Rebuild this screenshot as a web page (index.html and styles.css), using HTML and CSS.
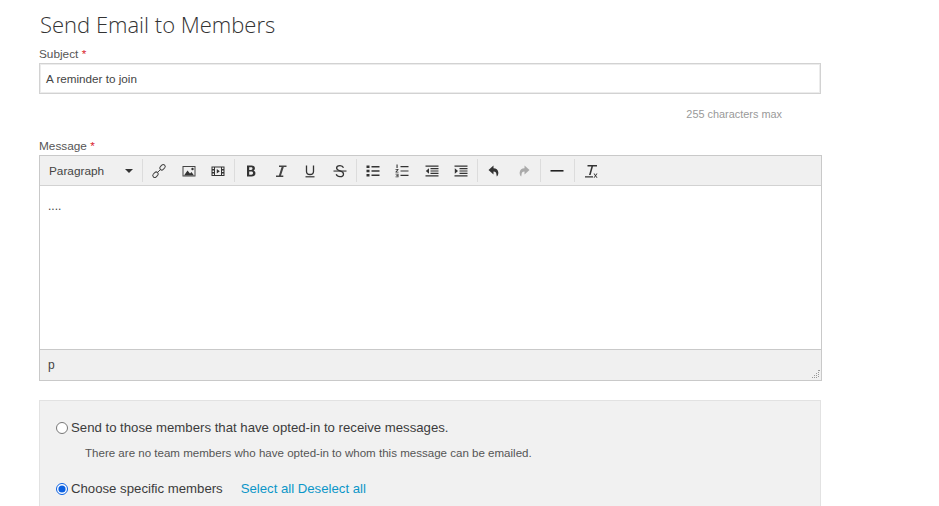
FILE: index.html
```html
<!DOCTYPE html>
<html lang="en">
<head>
<meta charset="utf-8">
<title>Send Email to Members</title>
<link rel="stylesheet" href="styles.css">
</head>
<body>
<main class="page">
  <h1 class="title">Send Email to Members</h1>
  <label class="label">Subject <span class="req">*</span></label>
  <div class="input">A reminder to join</div>
  <div class="hint">255 characters max</div>
  <label class="label label-msg">Message <span class="req">*</span></label>
  <div class="editor">
    <div class="toolbar">
      <div class="select"><span>Paragraph</span><i class="caret"></i></div>
      <div class="group">
        <svg class="ic" viewBox="0 0 16 16"><g fill="none" stroke="#444" stroke-width="1"><rect x="8.500" y="2.300" width="6" height="4" rx="2" transform="rotate(-45 11.500 4.300)"/><rect x="1.500" y="9.700" width="6" height="4" rx="2" transform="rotate(-45 4.500 11.700)"/><path d="M6.300 9.700l3.400-3.400"/></g></svg>
        <svg class="ic" viewBox="0 0 16 16"><path fill="#444" fill-rule="evenodd" d="M1.500 3h13v10.500h-13zM2.500 4v8.500h11V4z"/><path fill="#333" d="M3 12.500l3.500-5 2.500 3 1.500-1.500 2.500 3.500z"/><circle cx="11.500" cy="6" r="1.200" fill="#333"/></svg>
        <svg class="ic" viewBox="0 0 16 16"><path fill="#333" fill-rule="evenodd" d="M1.500 3.500h13v9.500h-13zM2.500 4.500V6H4V4.500zM12 4.500V6h1.500V4.500zM2.500 7.500V9H4V7.500zM12 7.500V9h1.500V7.500zM2.500 10.500V12H4v-1.500zM12 10.500V12h1.500v-1.500zM5 4.500v7.500h6V4.500zM6.800 6l3 2.200-3 2.300z"/></svg>
      </div>
      <div class="group">
        <svg class="ic" viewBox="0 0 16 16"><path fill="#333" fill-rule="evenodd" d="M4 2.500h4.500c2.200 0 3.400 1 3.400 2.800 0 1.100-.5 1.900-1.400 2.300 1.200.4 1.900 1.300 1.900 2.600 0 2.200-1.500 3.300-3.900 3.300H4zM6.200 4.300v2.600h1.900c.9 0 1.400-.5 1.400-1.300s-.5-1.300-1.400-1.300zM6.200 8.600v3.100h2.200c1.100 0 1.600-.6 1.600-1.600s-.6-1.500-1.600-1.500z"/></svg>
        <svg class="ic" viewBox="0 0 16 16"><path fill="#444" d="M6 2.500h7.500v1.400h-2.700L8 12.600h2.300V14H3v-1.400h2.900L8.600 3.900H6z"/></svg>
        <svg class="ic" viewBox="0 0 16 16"><path fill="none" stroke="#333" stroke-width="1.300" d="M4.500 2.500v6c0 2 1.300 3 3.500 3s3.500-1 3.500-3v-6"/><path fill="#333" d="M3.500 13.200h9v1.200h-9z"/></svg>
        <svg class="ic" viewBox="0 0 16 16"><path fill="none" stroke="#333" stroke-width="1.300" d="M11.500 4.800C11 3.400 9.800 2.700 8 2.700c-2.100 0-3.400 1-3.400 2.400 0 3.400 6.900 2.200 6.900 5.800 0 1.600-1.500 2.700-3.500 2.700-1.900 0-3.200-.8-3.800-2.300"/><path fill="#333" d="M1.500 7.500h13v1.100h-13z"/></svg>
      </div>
      <div class="group">
        <svg class="ic" viewBox="0 0 16 16"><path fill="#333" d="M1.500 2.500h3v2.600h-3zM1.500 6.700h3v2.600h-3zM1.500 10.900h3v2.600h-3zM6.500 3h8v1.400h-8zM6.500 7.300h8v1.400h-8zM6.500 11.500h8v1.400h-8z"/></svg>
        <svg class="ic" viewBox="0 0 16 16"><path fill="#333" d="M6.500 3h8v1.200h-8zM6.500 7.400h8v1.200h-8zM6.500 11.800h8v1.200h-8zM2.500 1.500h1.100v3.500H2.500zM1.500 6h3v.8L2.700 8.700h1.800v.8h-3v-.8l1.800-1.900H1.500zM1.500 10.700h3v3.500h-3v-.8h2.200v-.6H2.300v-.7h1.400v-.6H1.500z"/></svg>
        <svg class="ic" viewBox="0 0 16 16"><path fill="#333" d="M1.500 2.500h13v1.300h-13zM6.500 5h8v1.200h-8zM6.500 7.400h8v1.200h-8zM6.500 9.800h8v1.200h-8zM1.500 12.200h13v1.300h-13zM5 5.300v5.400L1.800 8z"/></svg>
        <svg class="ic" viewBox="0 0 16 16"><path fill="#333" d="M1.500 2.500h13v1.300h-13zM6.500 5h8v1.200h-8zM6.500 7.400h8v1.200h-8zM6.500 9.800h8v1.200h-8zM1.500 12.200h13v1.300h-13zM1.800 5.300v5.400L5 8z"/></svg>
      </div>
      <div class="group group-wide">
        <svg class="ic" viewBox="0 0 16 16"><path fill="#333" d="M7.500 2.500L2.500 7l5 4.500V8.500c2 0 2.800.8 3 3.500l.3 1.500c1.300-.7 1.700-3 1.500-4.300-.4-2.600-2-3.700-4.800-3.900z"/></svg>
        <svg class="ic" viewBox="0 0 16 16"><path fill="#aaa" d="M8.500 2.500l5 4.500-5 4.500V8.500c-2 0-2.800.8-3 3.500l-.3 1.500c-1.300-.7-1.700-3-1.500-4.300.4-2.600 2-3.700 4.800-3.900z"/></svg>
      </div>
      <div class="group group-wide">
        <svg class="ic" viewBox="0 0 16 16"><path fill="#222" d="M1.500 7h13v1.600h-13z"/></svg>
      </div>
      <div class="group">
        <svg class="ic" viewBox="0 0 16 16"><path fill="#333" d="M4.500 2h9.500v1.400h-4L7.600 12H6L8.400 3.400H4.500zM2 13.300h8v1.300H2zM10.500 10.500h1l1 1.400 1-1.400h1L13 12.700l1.600 2h-1.100l-1-1.400-1 1.400h-1l1.500-2z"/></svg>
      </div>
    </div>
    <div class="content">....</div>
    <div class="status"><span>p</span>
      <svg class="grip" viewBox="0 0 8 8"><path fill="#999" d="M6 0h2v1H6zM6 2h1v1H6zM4 3h1v1H4zM6 4h1v1H6zM2 5h1v1H2zM4 5h1v1H4zM6 6h1v1H6zM0 7h1v1H0zM2 7h1v1H2zM4 7h1v1H4z"/></svg>
    </div>
  </div>
  <section class="panel">
    <label class="opt"><input type="radio" name="to"><span>Send to those members that have opted-in to receive messages.</span></label>
    <p class="note">There are no team members who have opted-in to whom this message can be emailed.</p>
    <label class="opt opt-second"><input type="radio" name="to" checked><span>Choose specific members</span><a class="lnk first" href="#">Select all</a> <a class="lnk" href="#">Deselect all</a></label>
  </section>
</main>
</body>
</html>
```
FILE: styles.css
```css
html, body { margin: 0; height: 506px; overflow: hidden; background: #fff; }
body { font-family: "Liberation Sans", Arial, sans-serif; color: #444; font-size: 12px; }
.page { padding: 0 0 0 39px; width: 783px; }
.title { margin: 0; padding: 10px 0 0 1px; height: 36px; font: 300 22px/28px "Open Sans", sans-serif; color: #333; }
.label { display: block; font-size: 11.800px; line-height: 14px; color: #555; margin-top: 1px; }
.req { color: #d9232e; }
.input { box-sizing: border-box; width: 782px; height: 31px; margin-top: 2px; padding: 0 6px; border: 1px solid #d2d2d2; font-size: 11.700px; line-height: 30px; color: #444; box-shadow: inset 0 0 0 1px #ececec; }
.hint { width: 743px; text-align: right; margin-top: 13px; font-size: 10.900px; line-height: 14px; color: #999; }
.label-msg { margin-top: 18px; }
.editor { box-sizing: border-box; width: 783px; height: 226px; margin-top: 2px; border: 1px solid #c9c9c9; display: flex; flex-direction: column; background: #fff; }
.toolbar { height: 29px; flex: none; display: flex; align-items: center; background: #f0f0f0; border-bottom: 1px solid #d2d2d2; }
.select { box-sizing: border-box; width: 102px; padding: 0 9px; display: flex; justify-content: space-between; align-items: center; font-size: 11.800px; color: #444; }
.caret { width: 0; height: 0; border: 4px solid transparent; border-top-color: #333; border-bottom: 0; }
.group { display: flex; align-items: center; gap: 13.500px; height: 23px; padding: 0 8px; border-left: 1px solid #dcdcdc; }
.group-wide { padding-right: 8.500px; }
.ic { width: 16px; height: 16px; flex: none; display: block; }
.content { flex: 1; padding: 13px 8px; font-size: 12px; line-height: 14px; color: #444; }
.status { position: relative; height: 31px; flex: none; box-sizing: border-box; padding: 0 8px; background: #f0f0f0; border-top: 1px solid #c9c9c9; font-size: 12px; line-height: 30px; }
.grip { position: absolute; right: 1px; bottom: 2px; width: 8px; height: 8px; }
.panel { box-sizing: border-box; width: 782px; height: 121px; margin-top: 19px; padding: 18px 16px 0; background: #f1f1f1; border: 1px solid #e2e2e2; }
.opt { display: flex; align-items: center; font-size: 13.200px; line-height: 18px; color: #3c3c3c; }
.opt input { width: 12px; height: 12px; margin: 0 3px 0 0; accent-color: #0a5fe0; }
.note { margin: 9px 0 0 29px; font-size: 11.550px; line-height: 14px; color: #555; }
.opt-second { margin-top: 20px; }
.lnk { color: #0b96c8; text-decoration: none; white-space: pre; margin-left: 3.500px; }
.first { margin-left: 18px; }
```
